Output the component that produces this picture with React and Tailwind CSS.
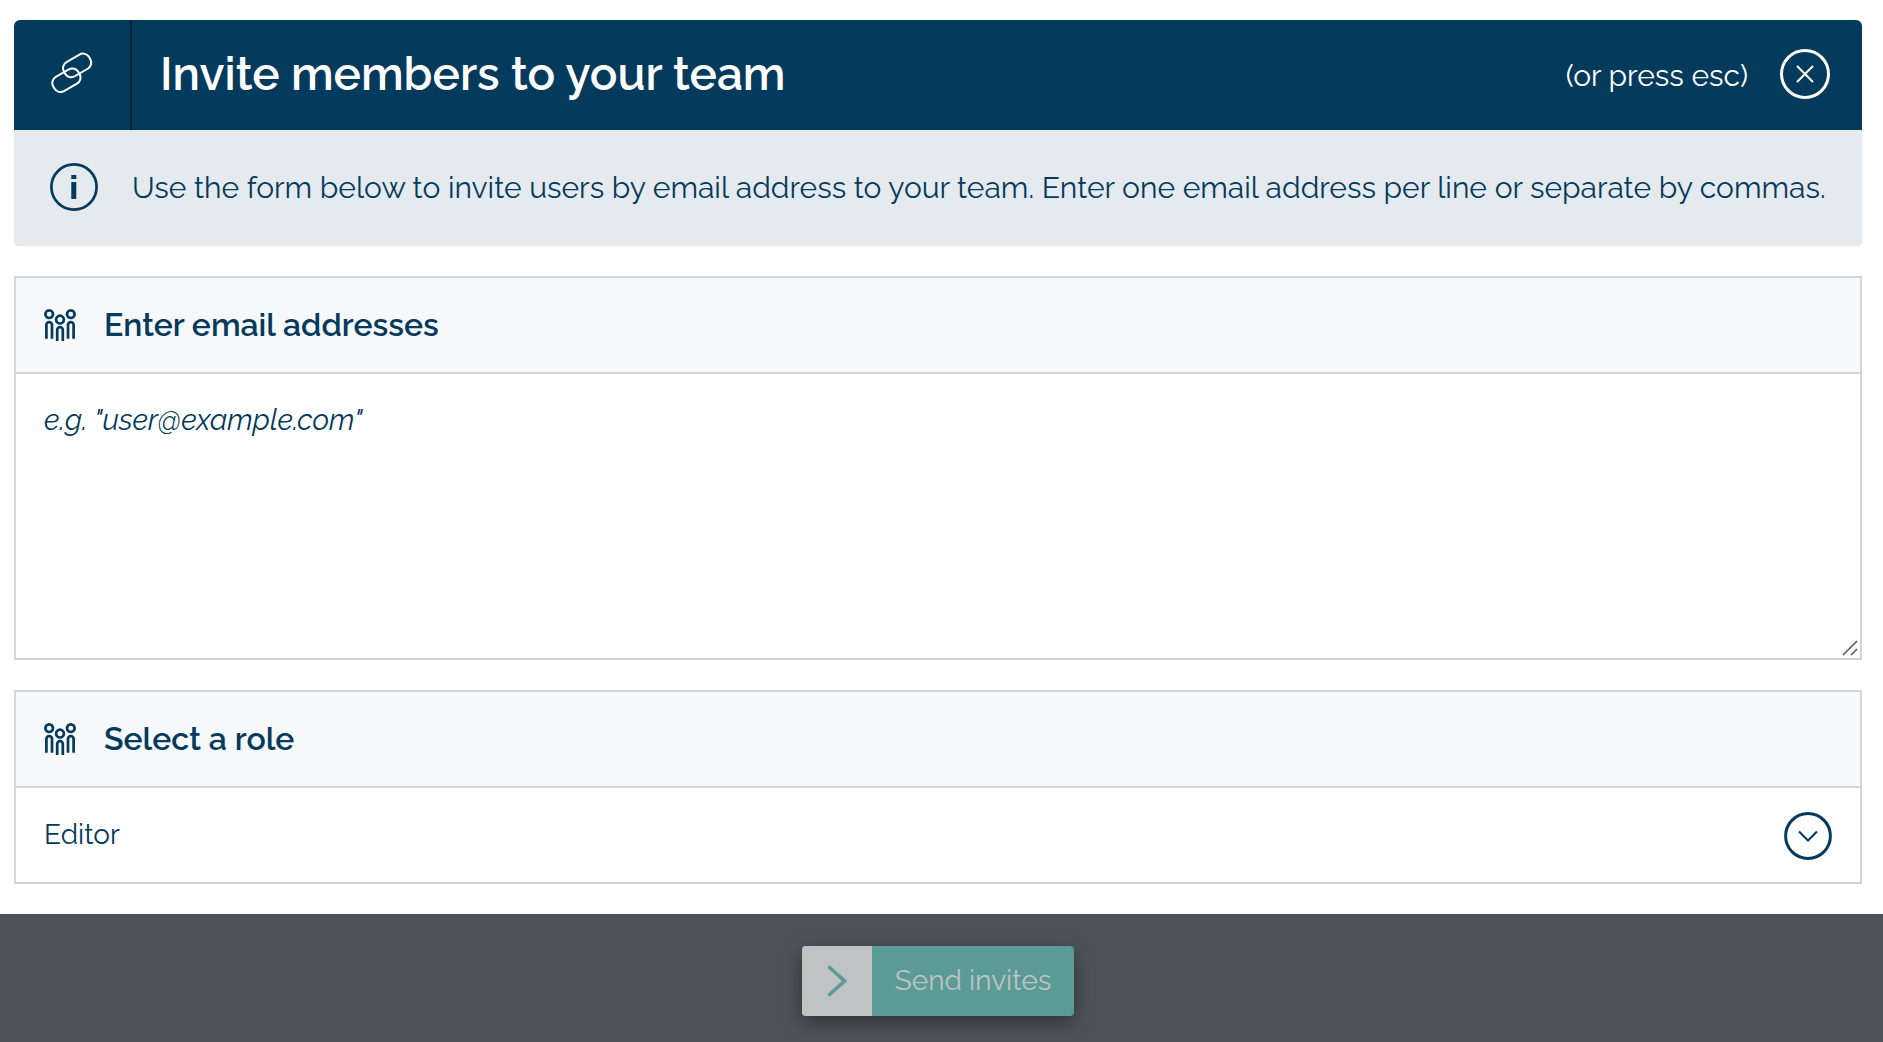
import { useState } from "react";

function LinkIcon() {
  return (
    <svg viewBox="0 0 42 42" className="size-[42px]" fill="none" stroke="currentColor" strokeWidth="2" aria-hidden="true">
      <rect x="11.6" y="5.2" width="29" height="16.4" rx="7" transform="rotate(-30 26.1 13.4)" />
      <rect x="0.9" y="20.1" width="29" height="16.4" rx="7" transform="rotate(-30 15.4 28.3)" />
    </svg>
  );
}

function InfoIcon() {
  return (
    <svg viewBox="0 0 48 48" className="size-12 shrink-0" aria-hidden="true">
      <circle cx="24" cy="24" r="22.6" fill="none" stroke="currentColor" strokeWidth="2.7" />
      <path d="M21.3 12h5v4h-5zM21.3 19h5v17h-5z" fill="currentColor" />
    </svg>
  );
}

function CloseIcon() {
  return (
    <svg viewBox="0 0 50 50" className="size-[50px]" fill="none" stroke="currentColor" aria-hidden="true">
      <circle cx="25" cy="25" r="23.5" strokeWidth="3" />
      <path d="M17 17l16 16M33 17l-16 16" strokeWidth="2" />
    </svg>
  );
}

function PeopleIcon() {
  return (
    <svg viewBox="0 0 32 32" className="size-8 shrink-0" fill="none" stroke="currentColor" strokeWidth="2.7" aria-hidden="true">
      <circle cx="5.2" cy="5.2" r="3.8" />
      <circle cx="26.8" cy="5.2" r="3.8" />
      <circle cx="16" cy="10.6" r="3.9" />
      <path d="M2.4 29.7V16a2.8 2.8 0 0 1 5.6 0v13.7" />
      <path d="M24 29.7V16a2.8 2.8 0 0 1 5.6 0v13.7" />
      <path d="M13.2 32V21a2.8 2.8 0 0 1 5.6 0v11" />
    </svg>
  );
}

function Card({ id, title, children }) {
  return (
    <section className="mt-[30px] border-2 border-[#d4d5d7] bg-white">
      <label
        htmlFor={id}
        className="flex h-24 items-center gap-7 border-b-2 border-[#d4d5d7] bg-[#f7f8fa] px-7 text-[32px] leading-10 font-semibold"
      >
        <PeopleIcon />
        {title}
      </label>
      <div className="relative">{children}</div>
    </section>
  );
}

export default function App() {
  const [emails, setEmails] = useState("");
  const [role, setRole] = useState("Editor");

  return (
    <form
      className="flex min-h-screen flex-col bg-white font-['Raleway','Lato',sans-serif] text-[#043a5c]"
      onSubmit={(e) => e.preventDefault()}
    >
      <div className="pt-5 pr-[21px] pb-[30px] pl-[14px]">
        <header className="flex h-[110px] items-stretch rounded-t-md bg-[#043a5c] text-white">
          <div className="flex w-[118px] items-center justify-center border-r-2 border-[#03243a] pb-1">
            <LinkIcon />
          </div>
          <h1 className="flex flex-1 items-center pb-0.5 pl-7 text-[46px] leading-none font-semibold">
            Invite members to your team
          </h1>
          <div className="flex items-center gap-8 pr-8 pb-0.5">
            <span className="pt-1 text-[30px] leading-9">(or press esc)</span>
            <button type="button" aria-label="Close">
              <CloseIcon />
            </button>
          </div>
        </header>

        <div className="flex min-h-[116px] items-center gap-[34px] rounded-b-sm bg-[#e5eaee] pr-7 pb-0.5 pl-9">
          <InfoIcon />
          <p className="pt-0.5 text-[30px] leading-9 whitespace-nowrap">
            Use the form below to invite users by email address to your team. Enter one email address per line or separate
            by commas.
          </p>
        </div>

        <Card id="emails" title="Enter email addresses">
          <textarea
            id="emails"
            value={emails}
            onChange={(e) => setEmails(e.target.value)}
            placeholder={'e.g. "user@example.com"'}
            className="block h-[284px] w-full resize-y px-7 py-[26px] text-[29px] leading-10 outline-none placeholder:text-[#043a5c] placeholder:italic placeholder:opacity-100 [&::-webkit-resizer]:hidden"
          />
          <svg
            viewBox="0 0 16 16"
            className="pointer-events-none absolute right-0.5 bottom-0.5 size-4"
            fill="none"
            stroke="#5b5b5b"
            strokeWidth="1.6"
            aria-hidden="true"
          >
            <path d="M1 15L15 1M9 15L15 9" />
          </svg>
        </Card>

        <Card id="role" title="Select a role">
          <select
            id="role"
            value={role}
            onChange={(e) => setRole(e.target.value)}
            className="block h-[94px] w-full appearance-none bg-white px-7 text-[28px] leading-10 outline-none"
          >
            <option>Editor</option>
            <option>Viewer</option>
            <option>Administrator</option>
          </select>
          <svg
            viewBox="0 0 48 48"
            className="pointer-events-none absolute top-6 right-7 size-12"
            fill="none"
            stroke="currentColor"
            aria-hidden="true"
          >
            <circle cx="24" cy="24" r="22.4" strokeWidth="3" />
            <path d="M15 19.5l9 9 9-9" strokeWidth="2" />
          </svg>
        </Card>
      </div>

      <footer className="flex flex-1 items-start justify-center bg-[#4f525b] pt-8 pr-[21px] pb-[26px] pl-[14px]">
        <button
          type="submit"
          className="flex h-[70px] items-stretch overflow-hidden rounded-sm bg-[#5a9b96] text-[28px] leading-9 text-[#c0c2c4] shadow-[0_6px_20px_rgba(0,0,0,0.4)]"
        >
          <span className="flex w-[70px] items-center justify-center bg-[#c0c2c4] text-[#5a9b96]">
            <svg viewBox="0 0 20 32" className="h-8 w-5" fill="none" stroke="currentColor" strokeWidth="3.6" aria-hidden="true">
              <path d="M1.5 1.5L17.5 16L1.5 30.5" />
            </svg>
          </span>
          <span className="flex items-center px-[23px]">Send invites</span>
        </button>
      </footer>
    </form>
  );
}
